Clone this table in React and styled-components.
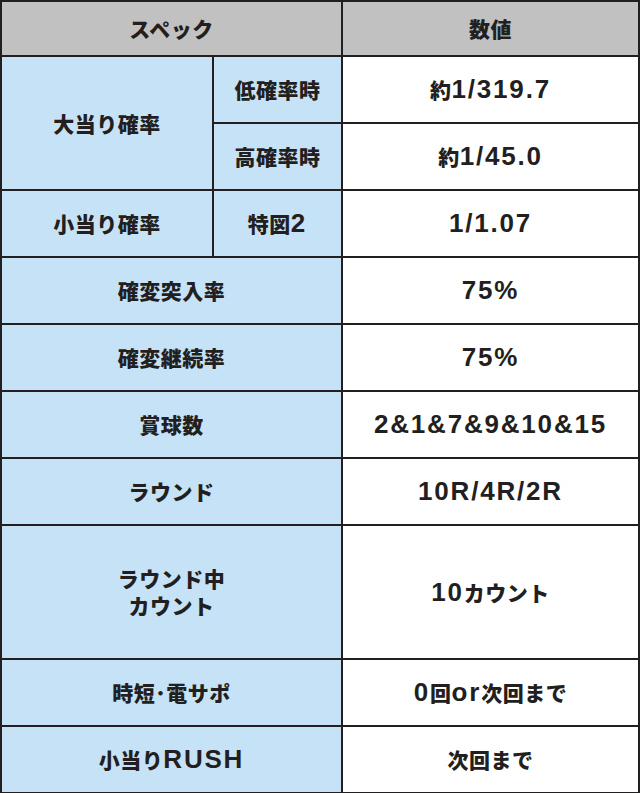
import React from "react";
import styled, { createGlobalStyle } from "styled-components";

const GlobalStyle = createGlobalStyle`
  html, body {
    margin: 0;
    padding: 0;
    background: #fff;
  }
`;

const BG = {
  head: "#c1c1c1",
  blue: "#c6e2f7",
  white: "#ffffff"
};

const Table = styled.div`
  display: grid;
  grid-template-columns: 210px 127px 295px;
  grid-template-rows: 53px repeat(11, 65px);
  gap: 2px;
  padding: 2px 2px 1px 2px;
  width: 640px;
  height: 793px;
  box-sizing: border-box;
  background: #231f20;
  color: #231f20;
  font-family: "Noto Sans CJK JP", "Noto Sans", sans-serif;
  font-weight: 900;
`;

const Cell = styled.div`
  display: flex;
  align-items: center;
  justify-content: center;
  text-align: center;
  background: ${p => BG[p.$bg || "white"]};
  grid-column: ${p => p.$col || "auto"};
  grid-row: ${p => p.$row || "auto"};
  font-size: 21px;
  line-height: 27px;
  letter-spacing: 0.5px;
`;

const Num = styled.span`
  font-family: "Liberation Sans", Arial, sans-serif;
  font-weight: 700;
  font-size: 26px;
  letter-spacing: 1.8px;
`;

// split latin runs so digits get their own font, like the original artwork
const Txt = ({ children }) => {
  const parts = String(children).split(/([A-Za-z0-9&/.%]+)/);
  return parts.map((p, i) =>
    /^[A-Za-z0-9&/.%]+$/.test(p) ? <Num key={i}>{p}</Num> : p
  );
};

const rows = [
  { label: "確変突入率", value: "75%", row: 5 },
  { label: "確変継続率", value: "75%", row: 6 },
  { label: "賞球数", value: "2&1&7&9&10&15", row: 7 },
  { label: "ラウンド", value: "10R/4R/2R", row: 8 }
];

const tail = [
  { label: "時短･電サポ", value: "0回or次回まで", row: 11 },
  { label: "小当りRUSH", value: "次回まで", row: 12 }
];

export default function App() {
  return (
    <>
      <GlobalStyle />
      <Table>
        <Cell $bg="head" $col="1 / 3" $row="1">スペック</Cell>
        <Cell $bg="head" $col="3" $row="1">数値</Cell>

        <Cell $bg="blue" $col="1" $row="2 / 4">大当り確率</Cell>
        <Cell $bg="blue" $col="2" $row="2">低確率時</Cell>
        <Cell $col="3" $row="2"><Txt>約1/319.7</Txt></Cell>
        <Cell $bg="blue" $col="2" $row="3">高確率時</Cell>
        <Cell $col="3" $row="3"><Txt>約1/45.0</Txt></Cell>

        <Cell $bg="blue" $col="1" $row="4">小当り確率</Cell>
        <Cell $bg="blue" $col="2" $row="4"><Txt>特図2</Txt></Cell>
        <Cell $col="3" $row="4"><Txt>1/1.07</Txt></Cell>

        {rows.map(r => (
          <React.Fragment key={r.label}>
            <Cell $bg="blue" $col="1 / 3" $row={r.row}>{r.label}</Cell>
            <Cell $col="3" $row={r.row}><Txt>{r.value}</Txt></Cell>
          </React.Fragment>
        ))}

        <Cell $bg="blue" $col="1 / 3" $row="9 / 11">
          ラウンド中<br />カウント
        </Cell>
        <Cell $col="3" $row="9 / 11"><Txt>10カウント</Txt></Cell>

        {tail.map(r => (
          <React.Fragment key={r.label}>
            <Cell $bg="blue" $col="1 / 3" $row={r.row}><Txt>{r.label}</Txt></Cell>
            <Cell $col="3" $row={r.row}><Txt>{r.value}</Txt></Cell>
          </React.Fragment>
        ))}
      </Table>
    </>
  );
}
